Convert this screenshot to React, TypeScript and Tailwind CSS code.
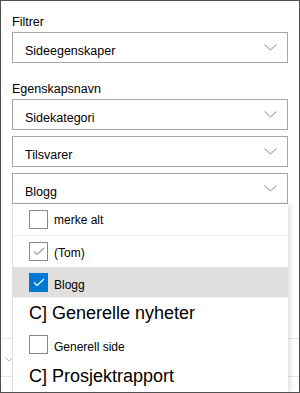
import React from "react";

const Chevron = ({ className = "" }: { className?: string }) => (
  <svg width="13" height="7" viewBox="0 0 13 7" className={className} fill="none">
    <path d="M0.5 0.5 L6.5 6 L12.5 0.5" stroke="#8a8886" strokeWidth="1" />
  </svg>
);

const Dropdown = ({ value }: { value: string }) => (
  <div className="h-[31px] w-full border border-[#a6a6a6] bg-white flex items-center justify-between pl-[12px] pr-[10px]">
    <span className="mt-[6px] text-[12.5px] text-black leading-[14px]">{value}</span>
    <Chevron />
  </div>
);

const Checkbox = ({ state }: { state: "empty" | "gray" | "blue" }) => {
  if (state === "blue") {
    return (
      <div className="w-[19px] h-[19px] bg-[#0078d4] flex items-center justify-center shrink-0">
        <svg width="12" height="9" viewBox="0 0 12 9" fill="none">
          <path d="M1 4.5 L4.2 7.5 L11 1" stroke="white" strokeWidth="1.2" />
        </svg>
      </div>
    );
  }
  return (
    <div className="w-[19px] h-[19px] border border-[#8a8886] bg-white flex items-center justify-center shrink-0">
      {state === "gray" && (
        <svg width="12" height="9" viewBox="0 0 12 9" fill="none">
          <path d="M1 4.5 L4.2 7.5 L11 1" stroke="#a19f9d" strokeWidth="1.2" />
        </svg>
      )}
    </div>
  );
};

const CheckRow = ({
  label,
  state,
  className = "",
  textClass = "",
}: {
  label: string;
  state: "empty" | "gray" | "blue";
  className?: string;
  textClass?: string;
}) => (
  <li className={`flex items-center gap-[6px] pl-[16px] ${className}`}>
    <Checkbox state={state} />
    <span className={`text-[12px] text-black leading-[14px] ${textClass}`}>{label}</span>
  </li>
);

const App = () => {
  return (
    <div className="relative w-[300px] h-[393px] overflow-hidden border border-[#505050] bg-white font-['Liberation_Sans',Arial,sans-serif]">
      <div className="px-[11px] pt-[13px]">
        <p className="text-[12.5px] leading-[16px] text-black mb-[2px]">Filtrer</p>
        <Dropdown value="Sideegenskaper" />

        <p className="text-[12.5px] leading-[16px] text-black mt-[18px] mb-[2px]">Egenskapsnavn</p>
        <div className="flex flex-col gap-[6px]">
          <Dropdown value="Sidekategori" />
          <Dropdown value="Tilsvarer" />
          <div className="relative">
            <Dropdown value="Blogg" />
            <ul className="absolute z-10 top-full left-0 w-[276px] bg-white border-l border-[#e1e1e1] shadow-[3px_0_4px_rgba(0,0,0,0.10)]">
              <CheckRow label="merke alt" state="empty" className="h-[32px] border-b border-[#edebe9]" />
              <CheckRow label="(Tom)" state="gray" className="h-[31px]" textClass="mt-[2px]" />
              <CheckRow label="Blogg" state="blue" className="h-[30px] bg-[#e1dfdd]" textClass="mt-[6px]" />
              <li className="h-[32px] flex items-center pl-[16px] text-[18px] text-black border-t border-[#f3f2f1]">
                C] Generelle nyheter
              </li>
              <CheckRow label="Generell side" state="empty" className="h-[31px]" textClass="mt-[5px]" />
              <li className="h-[32px] flex items-center pl-[16px] text-[18px] text-black">
                C] Prosjektrapport
              </li>
            </ul>
          </div>
        </div>
      </div>

      {/* underlying content partly covered by the open list */}
      <div className="mt-[134px] h-[39px] border-t border-b border-[#e6e6e6] flex items-center pl-[4px]">
        <Chevron className="mt-[3px] w-[8px]" />
      </div>
    </div>
  );
};

export default App;
